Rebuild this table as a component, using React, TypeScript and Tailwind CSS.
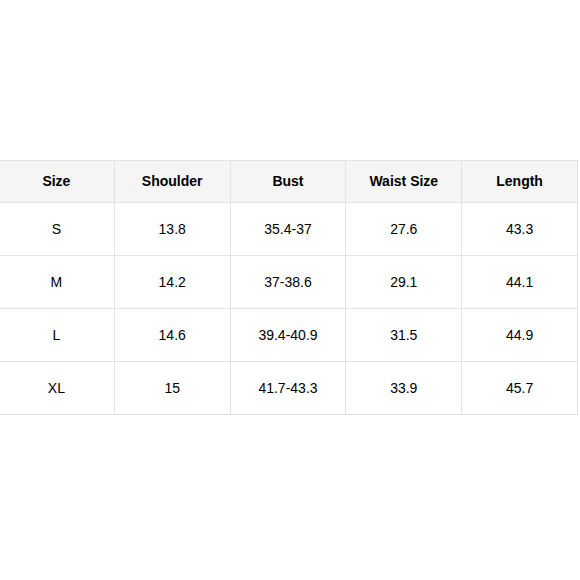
const headers = ['Size', 'Shoulder', 'Bust', 'Waist Size', 'Length'];

const rows = [
  ['S', '13.8', '35.4-37', '27.6', '43.3'],
  ['M', '14.2', '37-38.6', '29.1', '44.1'],
  ['L', '14.6', '39.4-40.9', '31.5', '44.9'],
  ['XL', '15', '41.7-43.3', '33.9', '45.7'],
];

export default function App() {
  return (
    <div className="w-[580px] h-[580px] bg-white overflow-hidden pt-[160px] font-['Liberation_Sans',Arial,sans-serif] text-[14px] text-black">
      <table className="-ml-[2px] w-[580px] border-collapse table-fixed">
        <thead>
          <tr className="bg-[#f5f5f5]">
            {headers.map((h) => (
              <th key={h} className="h-[42px] border border-[#e3e3e3] font-bold text-center p-0">
                {h}
              </th>
            ))}
          </tr>
        </thead>
        <tbody>
          {rows.map((r) => (
            <tr key={r[0]}>
              {r.map((c, i) => (
                <td key={i} className="h-[53px] border border-[#e3e3e3] text-center p-0">
                  {c}
                </td>
              ))}
            </tr>
          ))}
        </tbody>
      </table>
    </div>
  );
}
